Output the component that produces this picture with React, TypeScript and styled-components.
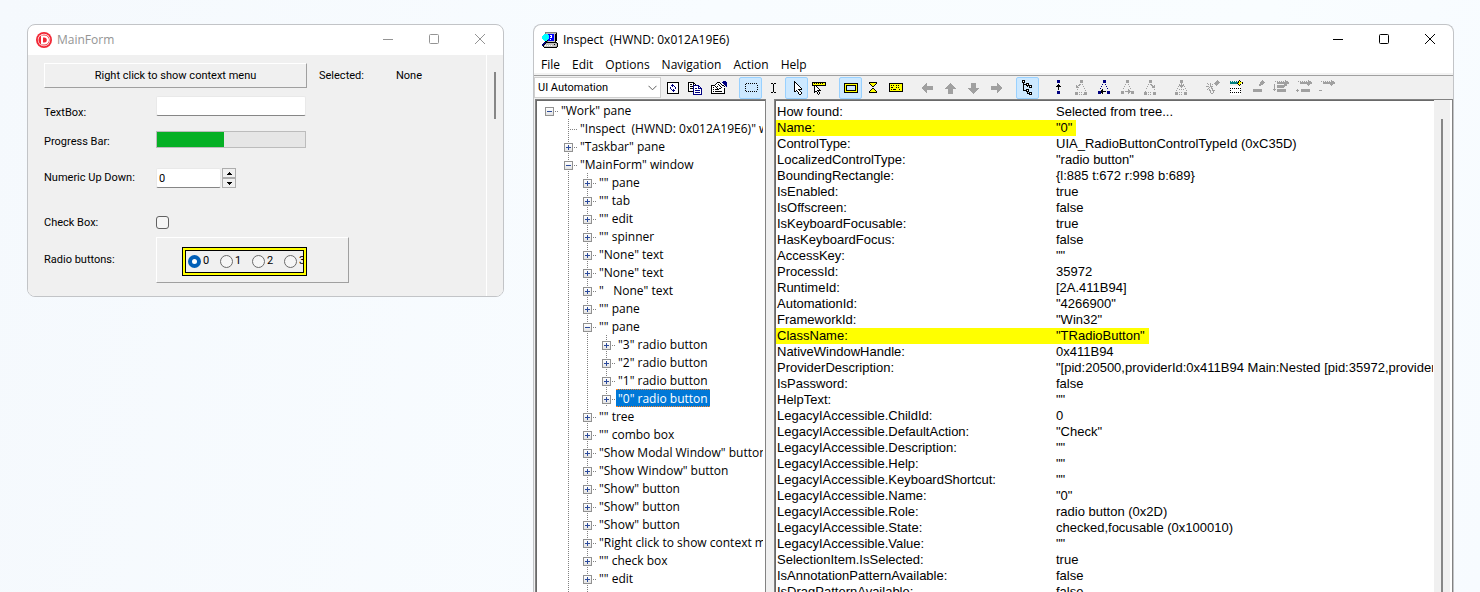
import React from 'react';
import styled, { createGlobalStyle } from 'styled-components';

const UI = '"Open Sans", "Noto Sans", sans-serif';
const FORM = 'Roboto, "Noto Sans", sans-serif';

const GlobalStyle = createGlobalStyle`
  * { box-sizing: border-box; }
  body { margin: 0; font: 12px/16px ${UI}; color: #000; }
  button, input, select { font: inherit; color: inherit; margin: 0; padding: 0; border-radius: 0; }
`;

const Desktop = styled.main`
  display: flex;
  align-items: flex-start;
  gap: 29px;
  height: 100vh;
  padding: 24px 26px 0 27px;
  overflow: hidden;
  background: linear-gradient(100deg, #f5f9fd, #f8fcff 45%, #f9fdff 80%, #f7fbff);
`;

const Window = styled.section<{ $grow?: boolean }>`
  display: flex;
  flex-direction: column;
  flex: ${p => (p.$grow ? '1 1 0' : '0 0 477px')};
  min-width: 0;
  align-self: ${p => (p.$grow ? 'stretch' : 'flex-start')};
  border: 1px solid #c2c4c7;
  border-bottom-width: ${p => (p.$grow ? 0 : 1)}px;
  border-radius: ${p => (p.$grow ? '8px 8px 0 0' : '8px')};
  background: #fff;
  overflow: hidden;
`;

const TitleBar = styled.header<{ $inactive?: boolean }>`
  display: flex;
  align-items: center;
  flex: none;
  height: 30px;
  padding-left: 8px;
  color: ${p => (p.$inactive ? '#949494' : '#000')};
`;

const Title = styled.h1`
  flex: 1;
  margin: 0 0 0 5px;
  font: 12px/16px ${UI};
  white-space: pre;
`;

const CaptionButton = styled.button`
  display: grid;
  place-items: center;
  width: 46px;
  height: 30px;
  padding-bottom: 2px;
  border: 0;
  background: none;
`;

function CaptionButtons() {
  return (
    <>
      <CaptionButton aria-label="Minimize">
        <svg width="10" height="10"><path d="M0 5.5h10" stroke="currentColor" /></svg>
      </CaptionButton>
      <CaptionButton aria-label="Maximize">
        <svg width="10" height="10"><rect x=".5" y=".5" width="9" height="9" rx="1" fill="none" stroke="currentColor" /></svg>
      </CaptionButton>
      <CaptionButton aria-label="Close">
        <svg width="10" height="10"><path d="M0 0l10 10M10 0L0 10" stroke="currentColor" /></svg>
      </CaptionButton>
    </>
  );
}

/* ---------- MainForm ---------- */

const FormBody = styled.div`
  display: flex;
  background: #f0f0f0;
  font: 11px/16px ${FORM};
`;

const Form = styled.form`
  flex: 1;
  padding: 8px 0 13px 16px;
`;

const FormRow = styled.div<{ $height: number; $space: number; $low?: boolean }>`
  display: flex;
  align-items: ${p => (p.$low ? 'flex-start' : 'center')};
  min-height: ${p => p.$height}px;
  margin-bottom: ${p => p.$space}px;
`;

const FieldLabel = styled.label<{ $low?: boolean }>`
  width: 112px;
  align-self: ${p => (p.$low ? 'flex-end' : 'auto')};
`;

const Bevel = `
  border: 1px solid #fff;
  border-right-color: #a0a0a0;
  border-bottom-color: #a0a0a0;
`;

const MenuTarget = styled.button`
  width: 263px;
  height: 25px;
  ${Bevel}
  background: #f0f0f0;
`;

const Selected = styled.output`
  display: flex;
  gap: 32px;
  margin-left: 12px;
`;

const TextInput = styled.input<{ $width: number }>`
  width: ${p => p.$width}px;
  height: 20px;
  padding: 0 2px;
  border: 1px solid #e9e9e9;
  border-bottom-color: #868686;
  border-radius: 2px;
  background: #fff;
`;

const Progress = styled.div`
  width: 150px;
  height: 17px;
  border: 1px solid #bcbcbc;
  background: #e6e6e6;
`;

const ProgressFill = styled.div`
  height: 100%;
  background: #06b025;
`;

const Spinner = styled.div`
  display: grid;
  margin-left: 1px;
`;

const SpinButton = styled.button`
  display: grid;
  place-items: center;
  width: 14px;
  height: 10px;
  border: 1px solid #adadad;
  background: #f0f0f0;
`;

const CheckBox = styled.input`
  appearance: none;
  width: 13px;
  height: 13px;
  border: 1px solid #626262;
  border-radius: 3px;
  background: #f6f6f6;
`;

const RadioPanel = styled.div`
  display: grid;
  place-items: center start;
  width: 193px;
  height: 46px;
  padding: 2px 0 0 25px;
  ${Bevel}
`;

const Highlight = styled.div`
  display: flex;
  width: 125px;
  height: 29px;
  padding: 1px;
  border: 1px solid #000;
  background: #ff0;
`;

const RadioStrip = styled.div`
  display: flex;
  flex: 1;
  align-items: center;
  margin: 1px;
  padding-left: 2px;
  border: 1px solid #000;
  background: #f0f0f0;
  overflow: hidden;
`;

const RadioLabel = styled.label`
  display: flex;
  align-items: center;
  gap: 2px;
  flex: 0 0 32px;
`;

const Radio = styled.input`
  appearance: none;
  flex: none;
  width: 13px;
  height: 13px;
  margin: 0;
  border: 1px solid #6b6b6b;
  border-radius: 50%;
  background: #f6f6f6;
  &:checked { border: 4px solid #005fb8; background: #fff; }
`;

const FormScroll = styled.div`
  width: 17px;
  padding: 17px 0 0 7px;
  border-left: 1px solid #fff;
`;

const FormThumb = styled.div`
  width: 2px;
  height: 47px;
  background: #868686;
`;

function MainForm() {
  return (
    <Window>
      <TitleBar $inactive>
        <svg width="16" height="16" viewBox="0 0 16 16">
          <circle cx="8" cy="8" r="8" fill="#f22735" />
          <circle cx="8" cy="8" r="6.2" fill="#fff" />
          <circle cx="8" cy="8" r="5.6" fill="#f22735" />
          <path d="M5 3.500h3.500a4.500 4.500 0 0 1 0 9H5z" fill="#fff" />
          <path d="M7 5.500h1.300a2.500 2.500 0 0 1 0 5H7z" fill="#f22735" />
        </svg>
        <Title>MainForm</Title>
        <CaptionButtons />
      </TitleBar>
      <FormBody>
        <Form onSubmit={e => e.preventDefault()}>
          <FormRow $height={25} $space={8}>
            <MenuTarget type="button">Right click to show context menu</MenuTarget>
            <Selected><span>Selected:</span><span>None</span></Selected>
          </FormRow>
          <FormRow $height={25} $space={10} $low>
            <FieldLabel $low htmlFor="text">TextBox:</FieldLabel>
            <TextInput id="text" $width={150} />
          </FormRow>
          <FormRow $height={19} $space={18} $low>
            <FieldLabel as="span" $low id="progress">Progress Bar:</FieldLabel>
            <Progress role="progressbar" aria-labelledby="progress" aria-valuenow={45}>
              <ProgressFill style={{ width: '45%' }} />
            </Progress>
          </FormRow>
          <FormRow $height={20} $space={26}>
            <FieldLabel htmlFor="number">Numeric Up Down:</FieldLabel>
            <TextInput id="number" $width={65} defaultValue="0" />
            <Spinner>
              <SpinButton type="button" aria-label="Increase">
                <svg width="5" height="3" shapeRendering="crispEdges"><path d="M2 0h1v1h1v1h1v1H0V2h1V1h1z" /></svg>
              </SpinButton>
              <SpinButton type="button" aria-label="Decrease">
                <svg width="5" height="3" shapeRendering="crispEdges"><path d="M0 0h5v1H4v1H3v1H2V2H1V1H0z" /></svg>
              </SpinButton>
            </Spinner>
          </FormRow>
          <FormRow $height={17} $space={6}>
            <FieldLabel htmlFor="check">Check Box:</FieldLabel>
            <CheckBox id="check" type="checkbox" />
          </FormRow>
          <FormRow $height={46} $space={0}>
            <FieldLabel as="span" id="radios">Radio buttons:</FieldLabel>
            <RadioPanel role="radiogroup" aria-labelledby="radios">
              <Highlight>
                <RadioStrip>
                  {['0', '1', '2', '3'].map(n => (
                    <RadioLabel key={n}>
                      <Radio type="radio" name="choice" value={n} defaultChecked={n === '0'} />
                      {n}
                    </RadioLabel>
                  ))}
                </RadioStrip>
              </Highlight>
            </RadioPanel>
          </FormRow>
        </Form>
        <FormScroll><FormThumb /></FormScroll>
      </FormBody>
    </Window>
  );
}

/* ---------- Pixel icons ---------- */

const INKS: Record<string, string> = {
  k: '#000000', w: '#ffffff', b: '#000080', g: '#a0a0a0', y: '#ffff00', t: '#008080', c: '#00ffff', u: '#0000ff', s: '#c0c0c0', d: '#808080',
};

function PixelIcon({ art }: { art: string[] }) {
  const cells: React.ReactElement[] = [];
  art.forEach((row, y) => {
    let x = 0;
    while (x < row.length) {
      const ink = row[x];
      let end = x + 1;
      while (row[end] === ink) end++;
      if (INKS[ink]) cells.push(<rect key={`${x}-${y}`} x={x} y={y} width={end - x} height={1} fill={INKS[ink]} />);
      x = end;
    }
  });
  return <svg width="16" height="16" viewBox="0 0 16 16" shapeRendering="crispEdges">{cells}</svg>;
}

const ART: Record<string, string[]> = {
  app: [
    '...dddddddddddd.',
    '...dssssssssssk.',
    '..ccccuuuuuuskk.',
    '.ccccccuwwuuskk.',
    'cccccccuuwuuskk.',
    'cccccccuwwuuskk.',
    'cccccccuuuuuskk.',
    '.cccccuuwuuuskk.',
    '..ccckuuuuuuskk.',
    '...kkdsssssssk..',
    '..bbkkkkkkkkkkk.',
    '.bbkssssssssssdk',
    'bbkssssssssskssk',
    'bkswswswswsssssk',
    '.kssssssssssssdk',
    '..kkkkkkkkkkkkk.',
  ],
  refresh: [
    '', '',
    '..kkkkkkkkkkkk',
    '..kwwwwwwwwwwk',
    '..kwwwwbwwwwwk',
    '..kwwwbbbwwwwk',
    '..kwwwwbwbwwwk',
    '..kwwbwwwwbwwk',
    '..kwwbwwwwbwwk',
    '..kwwwbwbwwwwk',
    '..kwwwwbbbwwwk',
    '..kwwwwwbwwwwk',
    '..kwwwwwwwwwwk',
    '..kkkkkkkkkkkk',
  ],
  copy: [
    '', '',
    'kkkkkk',
    'kwwwwkk',
    'kwkkwkwk',
    'kwwwwbbbbbb',
    'kwkkkbwwwwbb',
    'kwwwwbwwwwbwb',
    'kwkkkbwbbwbbbb',
    'kwwwwbwwwwwwwb',
    'kwwwwbwbbbbbwb',
    'kkkkkbwwwwwwwb',
    '.....bwbbbbbwb',
    '.....bwwwwwwwb',
    '.....bbbbbbbbb',
  ],
  properties: [
    '',
    '............bbb',
    '......kkk..bbbbb',
    '.....kwwwkwwbbbb',
    '....kwwkwwkw.bbb',
    'kkkkwwwwkwwkk.bb',
    'kwwwkwkwwkww.k.b',
    'kwkwwkwwwwk.ww',
    'kwwwwwkwkkwwwk',
    'kwkwkkkkwwwwwk',
    'kwwwwwwwwwwwwk',
    'kwkwkkkkkkkwwk',
    'kwwwwwwwwwwwwk',
    'kkkkkkkkkkkkkk',
  ],
  marquee: [
    '', '', '',
    '....k.k.k.k.k.k',
    '...k',
    '...............k',
    '...k',
    '...............k',
    '...k',
    '...............k',
    '...k',
    '....k.k.k.k.k.k',
  ],
  ibeam: [
    '', '', '',
    '......kk.kk',
    '........k', '........k', '........k', '........k', '........k', '........k', '........k',
    '........k',
    '......kk.kk',
  ],
  pointer: [
    '',
    '......k',
    '......kk',
    '......kwk',
    '......kwwk',
    '......kwwwk',
    '......kwwwwk',
    '......kwwwwwk',
    '......kwwwwwwk',
    '......kwwwkkkk',
    '......kwkwwk',
    '......kk.kwwk',
    '..........kwwk',
    '..........kwwk',
    '...........kk',
  ],
  pointerRuler: [
    '', '',
    '.kkkkkkkkkkkkkk',
    '.kykykykykykyyk',
    '.kyyyyyyyyyyyyk',
    '.kkkkkkkkkkkkkk',
    '...kwk',
    '...kwwk',
    '...kwwwk',
    '...kwwwwk',
    '...kwwkkkk',
    '...kkkwk',
    '...k..kwk',
    '......kwk',
    '.......k',
  ],
  frame: [
    '', '', '',
    '..kkkkkkkkkkkkkk',
    '..kyyyyyyyyyyyyk',
    '..kykkkkkkkkkkyk',
    '..kyk........kyk',
    '..kyk........kyk',
    '..kyk........kyk',
    '..kyk........kyk',
    '..kykkkkkkkkkkyk',
    '..kyyyyyyyyyyyyk',
    '..kkkkkkkkkkkkkk',
  ],
  hourglass: [
    '', '',
    '....kkkkkkkk',
    '....kyyyyyyk',
    '.....kyyyyk',
    '......kyyk',
    '.......kk',
    '',
    '.......kk',
    '......kyyk',
    '.....kyyyyk',
    '....kyyyyyyk',
    '....kkkkkkkk',
  ],
  keyboard: [
    '', '', '',
    '.kkkkkkkkkkkkkk',
    '.kyyyyyyyyyyyyk',
    '.kykykyykykyyyk',
    '.kyyyyyyyyyyyyk',
    '.kykkyyykykyyyk',
    '.kyyyyyyyyyyyyk',
    '.kykykkkyyykyyk',
    '.kyyyyyyyyyyyyk',
    '.kkkkkkkkkkkkkk',
  ],
  left: ['', '', '', '.......g', '......gg', '.....ggg', '....gggggggggg', '...ggggggggggg', '...ggggggggggg', '....gggggggggg', '.....ggg', '......gg', '.......g'],
  up: ['', '', '', '........g', '.......ggg', '......ggggg', '.....ggggggg', '....ggggggggg', '...ggggggggggg', '......ggggg', '......ggggg', '......ggggg', '......ggggg', '......ggggg'],
  down: ['', '', '', '......ggggg', '......ggggg', '......ggggg', '......ggggg', '......ggggg', '...ggggggggggg', '....ggggggggg', '.....ggggggg', '......ggggg', '.......ggg', '........g'],
  right: ['', '', '', '.........g', '.........gg', '.........ggg', '...gggggggggg', '...ggggggggggg', '...ggggggggggg', '...gggggggggg', '.........ggg', '.........gg', '.........g'],
  tree: [
    '...kkk',
    '...kwk',
    '...kkk',
    '....k..kkk',
    '....kkkkwk',
    '....k..kkkkkk',
    '....k...k.kwk',
    '....k.....kkk',
    '....k',
    '....k..kkk',
    '....kkkkwk',
    '.......kkk',
    '........k.kkk',
    '........kkkwk',
    '..........kkk',
  ],
  parent: [
    '.......bbb', '.......bbb', '.......bbb', '', '........k', '.......kkk', '......kkkkk', '........k', '........k', '........k', '',
    '.......bbb', '.......bbb', '.......bbb',
  ],
  firstChild: [
    '.......ggg', '.......ggg', '.......ggg', '', '......gg.g', '...g.gg', '...gg.....g', '...ggg', '...........g', '....g', '............g', '',
    '..ggg.g.g..ggg', '..ggg......ggg', '..ggg.g.g.gggg',
  ],
  previous: [
    '.......bbb', '.......bbb', '.......bbb', '', '......b..b', '', '.....b....b', '', '....b......b', '......k', '.....kk', '..bbbkkkkk.bbb', '..bbbkk....bbb', '..bbb.k....bbb',
  ],
  next: [
    '.......ggg', '.......ggg', '.......ggg', '', '......g..g', '', '.....g....g', '', '....g......g', '.........g', '.........gg', '..ggg.ggggggggg', '..ggg....gg.ggg', '..ggg....g..ggg',
  ],
  lastChild: [
    '.......ggg', '.......ggg', '.......ggg', '', '......g.gg', '.........gg.g', '.....g....ggg', '..........ggg', '....g', '............g', '', '...g',
    '..ggg.g.g..ggg', '..ggg......ggg', '..ggg.g.g..ggg',
  ],
  focusTree: [
    '.......ggg', '.......ggg', '.......ggg', '........g', '......g.g.g', '......ggggg', '.....g.ggg.g', '........g', '....g.......g', '......g.g.g', '...g.........g', '',
    '..ggg.g.g..ggg', '..ggg......ggg', '..ggg.g.g..ggg',
  ],
  invoke: [
    '.............g', '............ggg', '...........ggggg', '...g..g...ggggg', '....g.g.g..ggg', '......g.....g', '..ggg.ggg', '.....g.g', '....g..gg', '...g.g..g', '.....gg.ggg', '......g..g', '......g..g', '.......gg',
  ],
  action: [
    '............k', '...t.t.t.t.kyk', '...ttttttttkyyyk', '...tttttttkyyywk', '...........kyk', '............k',
    '...wwwwwwwwwww', '...wwwwwwwwwww', '...kwkwkwkwkwk', '...wwwwwwwwwww', '...kwwwwwwwwwk', '...wwwwwwwwwww', '...kwkwkwkwkwk', '...wwwwwwwwwww', '...wwwwwwwwwww',
  ],
  mark1: ['............g', '...........ggg', '..........ggggg', '..........gggg', '.........gggg', '.........gg', '', '', '', '...ggggggggg', '...ggggggggg', '...ggggggggg'],
  mark2: ['............g', '..g.g.g.g.g.ggg', '....gggggggggggg', '....gggggggggggg', '.g.........ggg', '.g..gggggggggg', '.g..gggggggg', '.g..ggggggg', '.g', 'ggg.ggggggggg', '.g..ggggggggg', '....ggggggggg'],
  mark3: ['............g', '..g.g.g.g.g.ggg', '....gggggggggggg', '....gggggggggggg', '...........ggg', '............g', '', '', '', '.g...ggggggggg', 'ggg..ggggggggg', '.g...ggggggggg'],
  mark4: ['............g', '..g.g.g.g.g.ggg', '....gggggggggggg', '....gggggggggggg', '...........ggg', '............g', '', '', '', '', 'ggg'],
};

/* ---------- Inspect ---------- */

const MenuBar = styled.nav`
  display: flex;
  flex: none;
  height: 20px;
  padding: 2px 0 0 1px;
  border-bottom: 2px solid #f3f3f3;
`;

const MenuItem = styled.button`
  padding: 0 6px;
  border: 0;
  background: none;
`;

const ToolBar = styled.div`
  display: flex;
  align-items: center;
  flex: none;
  height: 24px;
  border-top: 1px solid #a0a0a0;
  background: #f0f0f0;
  overflow: hidden;
`;

const ModeBox = styled.div`
  display: grid;
  flex: 0 0 127px;
  align-items: center;
  margin-right: 1px;
`;

const ModeSelect = styled.select`
  grid-area: 1 / 1;
  appearance: none;
  height: 21px;
  padding: 0 3px;
  border: 1px solid #d0d0d0;
  background: #fff;
  font: 11px/16px ${FORM};
`;

const Chevron = styled.svg`
  grid-area: 1 / 1;
  justify-self: end;
  margin-right: 4px;
  pointer-events: none;
`;

const ToolGroup = styled.div`
  display: flex;
  flex: none;
  margin-right: 8px;
`;

const ToolButton = styled.button<{ $on?: boolean }>`
  display: grid;
  place-items: center start;
  width: 23px;
  height: 22px;
  padding-left: 2px;
  border: 1px solid ${p => (p.$on ? '#99d1ff' : 'transparent')};
  border-radius: 2px;
  background: ${p => (p.$on ? '#cce8ff' : 'none')};
`;

const Panes = styled.div`
  display: flex;
  flex: 1;
  min-height: 0;
  gap: 8px;
  padding-left: 1px;
  background: #f0f0f0;
`;

const Sunken = `
  border: 1px solid #828282;
  border-bottom: 0;
  background: #fff;
  overflow: hidden;
`;

const TreePane = styled.ul`
  flex: 0 0 231px;
  margin: 0;
  padding: 1px 2px 0 9px;
  list-style: none;
  ${Sunken}
  box-shadow: inset 1px 1px 0 #696969;
`;

const TreeRow = styled.li`
  display: flex;
  height: 18px;
  overflow: hidden;
  white-space: pre;
`;

const DOTS = 'repeating-linear-gradient(#808080 0 1px, transparent 1px 2px)';
const DOTS_ACROSS = 'repeating-linear-gradient(90deg, #808080 0 1px, transparent 1px 2px)';

const Guide = styled.span<{ $line: boolean }>`
  flex: 0 0 19px;
  background: ${p => (p.$line ? `${DOTS} 4px 0 / 1px 100% no-repeat` : 'none')};
`;

const Joint = styled.span<{ $line: boolean; $branch: boolean }>`
  display: flex;
  align-items: center;
  flex: 0 0 14px;
  padding-top: 3px;
  background:
    ${DOTS_ACROSS} ${p => (p.$branch ? 10 : 4)}px 10px / 10px 1px no-repeat
    ${p => (p.$line ? `, ${DOTS} 4px 0 / 1px 100% no-repeat` : '')};
`;

const Expander = styled.button`
  display: grid;
  place-items: center;
  width: 9px;
  height: 9px;
  border: 1px solid #919191;
  background: linear-gradient(#fff, #e4e4e4);
`;

const NodeLabel = styled.span<{ $selected: boolean }>`
  padding: 2px 2px 0;
  line-height: 14px;
  border: 1px dotted ${p => (p.$selected ? '#ff8728' : 'transparent')};
  border-width: 1px 0;
  background: ${p => (p.$selected ? '#0078d7' : 'none')};
  color: ${p => (p.$selected ? '#fff' : '#000')};
`;

const PropertyPane = styled.div`
  display: flex;
  flex: 1;
  min-width: 0;
  ${Sunken}
  box-shadow: inset 1px 1px 0 #696969;
`;

const PropertyView = styled.div`
  flex: 1;
  min-width: 0;
  margin-right: 1px;
  padding: 4px 0 0 1px;
  overflow: hidden;
`;

const PropertyTable = styled.table`
  border-collapse: collapse;
  font: 13px/16px "Liberation Sans", Arial, sans-serif;
  white-space: nowrap;
`;

const PropertyName = styled.th<{ $marked: boolean }>`
  min-width: 280px;
  height: 16px;
  padding: 0 0 0 1px;
  font-weight: 400;
  text-align: left;
  background: ${p => (p.$marked ? '#ff0' : 'none')};
`;

const PropertyValue = styled.td`
  height: 16px;
  padding: 0;
`;

const ValueText = styled.span<{ $marked: boolean }>`
  display: block;
  width: fit-content;
  padding-right: 4px;
  background: ${p => (p.$marked ? '#ff0' : 'none')};
`;

const ScrollTrack = styled.div`
  flex: 0 0 18px;
  padding: 19px 0 0 7px;
  border-right: 2px solid #fff;
  background: #f0f0f0;
`;

const ScrollThumb = styled.div`
  width: 2px;
  height: 100%;
  background: #868686;
`;

type Node = { text: string; depth: number; state: '+' | '-' | ''; selected?: boolean };

const NODES: Node[] = [
  { text: '"Work" pane', depth: 0, state: '-' },
  { text: '"Inspect  (HWND: 0x012A19E6)" window', depth: 1, state: '' },
  { text: '"Taskbar" pane', depth: 1, state: '+' },
  { text: '"MainForm" window', depth: 1, state: '-' },
  { text: '"" pane', depth: 2, state: '+' },
  { text: '"" tab', depth: 2, state: '+' },
  { text: '"" edit', depth: 2, state: '+' },
  { text: '"" spinner', depth: 2, state: '+' },
  { text: '"None" text', depth: 2, state: '+' },
  { text: '"None" text', depth: 2, state: '+' },
  { text: '"   None" text', depth: 2, state: '+' },
  { text: '"" pane', depth: 2, state: '+' },
  { text: '"" pane', depth: 2, state: '-' },
  { text: '"3" radio button', depth: 3, state: '+' },
  { text: '"2" radio button', depth: 3, state: '+' },
  { text: '"1" radio button', depth: 3, state: '+' },
  { text: '"0" radio button', depth: 3, state: '+', selected: true },
  { text: '"" tree', depth: 2, state: '+' },
  { text: '"" combo box', depth: 2, state: '+' },
  { text: '"Show Modal Window" button', depth: 2, state: '+' },
  { text: '"Show Window" button', depth: 2, state: '+' },
  { text: '"Show" button', depth: 2, state: '+' },
  { text: '"Show" button', depth: 2, state: '+' },
  { text: '"Show" button', depth: 2, state: '+' },
  { text: '"Right click to show context menu" button', depth: 2, state: '+' },
  { text: '"" check box', depth: 2, state: '+' },
  { text: '"" edit', depth: 2, state: '+' },
  { text: '"" pane', depth: 2, state: '+' },
];

const PROPERTIES: [string, string][] = [
  ['How found:', 'Selected from tree...'],
  ['Name:', '"0"'],
  ['ControlType:', 'UIA_RadioButtonControlTypeId (0xC35D)'],
  ['LocalizedControlType:', '"radio button"'],
  ['BoundingRectangle:', '{l:885 t:672 r:998 b:689}'],
  ['IsEnabled:', 'true'],
  ['IsOffscreen:', 'false'],
  ['IsKeyboardFocusable:', 'true'],
  ['HasKeyboardFocus:', 'false'],
  ['AccessKey:', '""'],
  ['ProcessId:', '35972'],
  ['RuntimeId:', '[2A.411B94]'],
  ['AutomationId:', '"4266900"'],
  ['FrameworkId:', '"Win32"'],
  ['ClassName:', '"TRadioButton"'],
  ['NativeWindowHandle:', '0x411B94'],
  ['ProviderDescription:', '"[pid:20500,providerId:0x411B94 Main:Nested [pid:35972,providerId:0x411B94'],
  ['IsPassword:', 'false'],
  ['HelpText:', '""'],
  ['LegacyIAccessible.ChildId:', '0'],
  ['LegacyIAccessible.DefaultAction:', '"Check"'],
  ['LegacyIAccessible.Description:', '""'],
  ['LegacyIAccessible.Help:', '""'],
  ['LegacyIAccessible.KeyboardShortcut:', '""'],
  ['LegacyIAccessible.Name:', '"0"'],
  ['LegacyIAccessible.Role:', 'radio button (0x2D)'],
  ['LegacyIAccessible.State:', 'checked,focusable (0x100010)'],
  ['LegacyIAccessible.Value:', '""'],
  ['SelectionItem.IsSelected:', 'true'],
  ['IsAnnotationPatternAvailable:', 'false'],
  ['IsDragPatternAvailable:', 'false'],
];

const MARKED = ['Name:', 'ClassName:'];

const TOOLS: string[][] = [
  ['refresh', 'copy', 'properties'],
  ['marquee', 'ibeam', 'pointer', 'pointerRuler'],
  ['frame', 'hourglass', 'keyboard'],
  ['left', 'up', 'down', 'right'],
  ['tree'],
  ['parent', 'firstChild', 'previous', 'next', 'lastChild'],
  ['focusTree'],
  ['invoke', 'action', 'mark1', 'mark2', 'mark3', 'mark4'],
];

const PRESSED = ['marquee', 'pointer', 'frame', 'tree'];

function Inspect() {
  return (
    <Window $grow>
      <TitleBar>
        <PixelIcon art={ART.app} />
        <Title>Inspect  (HWND: 0x012A19E6)</Title>
        <CaptionButtons />
      </TitleBar>
      <MenuBar>
        {['File', 'Edit', 'Options', 'Navigation', 'Action', 'Help'].map(m => <MenuItem key={m}>{m}</MenuItem>)}
      </MenuBar>
      <ToolBar role="toolbar">
        <ModeBox>
          <ModeSelect aria-label="Mode"><option>UI Automation</option></ModeSelect>
          <Chevron width="9" height="6"><path d="M.5 .8l4 4 4-4" fill="none" stroke="#5f5f5f" /></Chevron>
        </ModeBox>
        {TOOLS.map(group => (
          <ToolGroup key={group[0]}>
            {group.map(name => (
              <ToolButton key={name} aria-label={name} $on={PRESSED.includes(name)}>
                <PixelIcon art={ART[name]} />
              </ToolButton>
            ))}
          </ToolGroup>
        ))}
      </ToolBar>
      <Panes>
        <TreePane>
          {NODES.map((n, i) => (
            <TreeRow key={i}>
              {Array.from({ length: n.depth }, (_, d) => <Guide key={d} $line={d > 0} />)}
              <Joint $branch={n.state !== ''} $line={n.depth > 0}>
                {n.state && (
                  <Expander aria-label={n.state === '+' ? 'Expand' : 'Collapse'}>
                    <svg width="5" height="5" shapeRendering="crispEdges">
                      <path d={n.state === '+' ? 'M0 2h5v1H0zM2 0h1v5H2z' : 'M0 2h5v1H0z'} fill="#2b4a9b" />
                    </svg>
                  </Expander>
                )}
              </Joint>
              <NodeLabel $selected={!!n.selected}>{n.text}</NodeLabel>
            </TreeRow>
          ))}
        </TreePane>
        <PropertyPane>
          <PropertyView>
            <PropertyTable>
              <tbody>
                {PROPERTIES.map(([name, value]) => {
                  const marked = MARKED.includes(name);
                  return (
                    <tr key={name}>
                      <PropertyName scope="row" $marked={marked}>{name}</PropertyName>
                      <PropertyValue><ValueText $marked={marked}>{value}</ValueText></PropertyValue>
                    </tr>
                  );
                })}
              </tbody>
            </PropertyTable>
          </PropertyView>
          <ScrollTrack><ScrollThumb /></ScrollTrack>
        </PropertyPane>
      </Panes>
    </Window>
  );
}

export default function App() {
  return (
    <Desktop>
      <GlobalStyle />
      <MainForm />
      <Inspect />
    </Desktop>
  );
}
